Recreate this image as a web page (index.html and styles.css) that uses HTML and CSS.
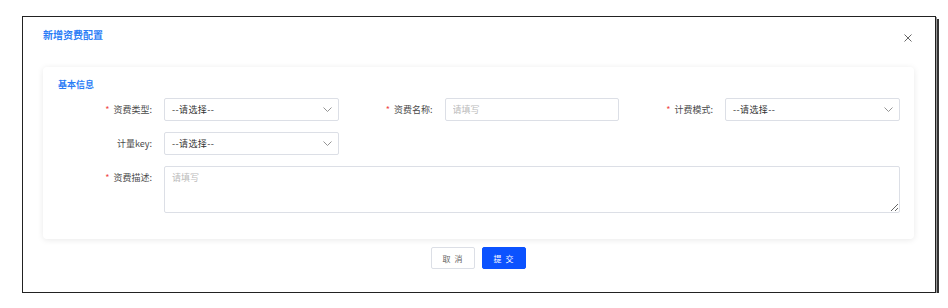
FILE: index.html
```html
<!DOCTYPE html>
<html lang="zh-CN">
<head>
  <meta charset="UTF-8">
  <meta name="viewport" content="width=device-width, initial-scale=1.0">
  <title>新增资费配置</title>
  <link rel="stylesheet" href="styles.css">
</head>
<body>
  <div class="dialog">
    <div class="dialog-header">
      <span class="dialog-title">新增资费配置</span>
      <button class="close-btn" aria-label="关闭">
        <svg width="8" height="8" viewBox="0 0 8 8"><path d="M0.5 0.5L7.5 7.5M7.5 0.5L0.5 7.5" stroke="#666" stroke-width="1" fill="none"/></svg>
      </button>
    </div>

    <div class="card">
      <div class="card-title">基本信息</div>

      <div class="form-row">
        <div class="field">
          <label class="field-label"><span class="req">*</span>资费类型:</label>
          <div class="select">
            <span>--请选择--</span>
            <svg class="chevron" width="9" height="5" viewBox="0 0 9 5"><path d="M0.5 0.5L4.5 4.5L8.5 0.5" stroke="#888" stroke-width="0.9" fill="none"/></svg>
          </div>
        </div>
        <div class="field">
          <label class="field-label"><span class="req">*</span>资费名称:</label>
          <input class="input" type="text" placeholder="请填写">
        </div>
        <div class="field">
          <label class="field-label"><span class="req">*</span>计费模式:</label>
          <div class="select">
            <span>--请选择--</span>
            <svg class="chevron" width="9" height="5" viewBox="0 0 9 5"><path d="M0.5 0.5L4.5 4.5L8.5 0.5" stroke="#888" stroke-width="0.9" fill="none"/></svg>
          </div>
        </div>
      </div>

      <div class="form-row">
        <div class="field">
          <label class="field-label">计量key:</label>
          <div class="select">
            <span>--请选择--</span>
            <svg class="chevron" width="9" height="5" viewBox="0 0 9 5"><path d="M0.5 0.5L4.5 4.5L8.5 0.5" stroke="#888" stroke-width="0.9" fill="none"/></svg>
          </div>
        </div>
      </div>

      <div class="form-row">
        <div class="field field-wide">
          <label class="field-label"><span class="req">*</span>资费描述:</label>
          <textarea class="textarea" placeholder="请填写"></textarea>
        </div>
      </div>
    </div>

    <div class="dialog-footer">
      <button class="btn">取 消</button>
      <button class="btn btn-primary">提 交</button>
    </div>
  </div>
</body>
</html>
```

FILE: styles.css
```css
body {
  margin: 0;
  background: #fff;
  font-family: "Noto Sans CJK SC", "Noto Sans", sans-serif;
  color: #333;
}

.dialog {
  box-sizing: border-box;
  width: 914px;
  height: 277px;
  margin: 16px 0 0 22px;
  border: 1px solid #222;
  box-shadow: 1px 1px 0 #999, 3px 3px 0 #333;
  padding: 11px 0 0 20px;
}

.dialog-header {
  display: flex;
  justify-content: space-between;
  align-items: center;
  height: 14px;
  padding-right: 23px;
}

.dialog-title {
  font-size: 10px;
  font-weight: 700;
  color: #2a7cf6;
  line-height: 14px;
}

.close-btn {
  border: none;
  background: none;
  padding: 0;
  margin-top: 6px;
  width: 8px;
  height: 8px;
  display: flex;
  cursor: pointer;
}

.card {
  margin-top: 25px;
  width: 871px;
  box-sizing: border-box;
  padding: 11px 15px 26px 15px;
  background: #fff;
  border-radius: 4px;
  box-shadow: 0 1px 6px rgba(0, 0, 0, 0.09);
}

.card-title {
  font-size: 9px;
  font-weight: 700;
  color: #2a7cf6;
  line-height: 14px;
  margin-bottom: 6px;
}

.form-row {
  display: flex;
  margin-bottom: 11px;
}

.form-row:last-child {
  margin-bottom: 0;
}

.field {
  display: flex;
  align-items: flex-start;
  width: 280.5px;
}

.field-wide {
  width: 842px;
}

.field-label {
  box-sizing: border-box;
  width: 106px;
  padding-right: 12px;
  text-align: right;
  font-size: 9px;
  line-height: 23px;
  color: #4a4a4a;
  flex-shrink: 0;
}

.req {
  color: #f04848;
  margin-right: 4px;
}

.select,
.input {
  box-sizing: border-box;
  width: 174.5px;
  height: 23px;
  border: 1px solid #dcdfe6;
  border-radius: 2px;
  background: #fff;
  font-size: 9px;
  color: #333;
  font-family: inherit;
}

.select {
  display: flex;
  align-items: center;
  justify-content: space-between;
  padding: 0 6px 0 7px;
}

.select span {
  letter-spacing: 0.4px;
}

.input {
  padding: 0 7px;
  outline: none;
}

.input::placeholder,
.textarea::placeholder {
  color: #bbb;
}

.textarea {
  box-sizing: border-box;
  width: 736px;
  height: 47px;
  border: 1px solid #dcdfe6;
  border-radius: 2px;
  padding: 4px 7px;
  font-size: 9px;
  font-family: inherit;
  outline: none;
  margin: 0;
}

.dialog-footer {
  display: flex;
  justify-content: center;
  gap: 7px;
  margin-top: 8px;
  width: 871px;
}

.btn {
  box-sizing: border-box;
  width: 44px;
  height: 22px;
  border: 1px solid #dcdfe6;
  border-radius: 2px;
  background: #fff;
  font-size: 8px;
  font-family: inherit;
  color: #666;
  letter-spacing: 1px;
  cursor: pointer;
  padding: 0;
}

.btn-primary {
  background: #0b52ff;
  border-color: #0b52ff;
  color: #fff;
}
```
